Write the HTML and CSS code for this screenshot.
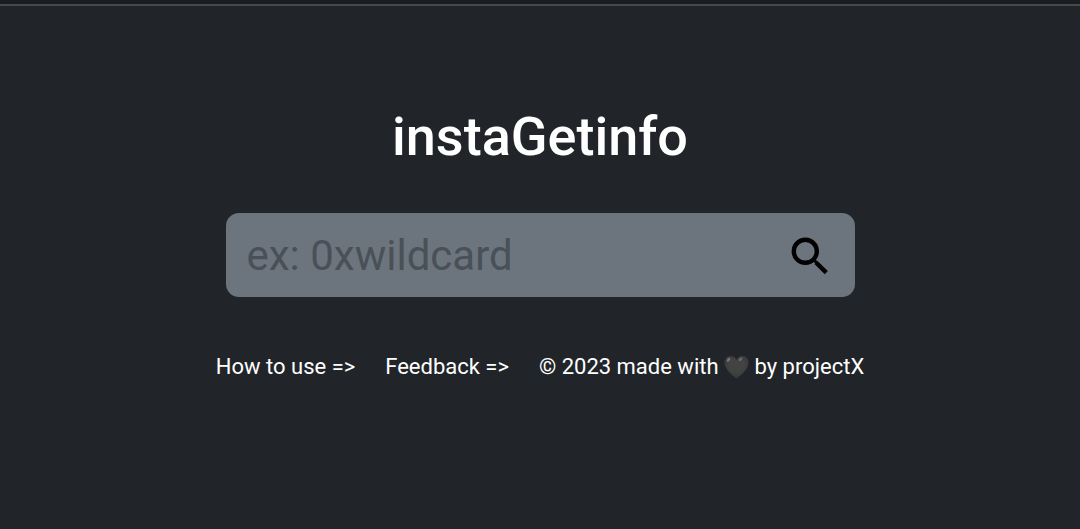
FILE: index.html
```html
<!DOCTYPE html>
<html lang="en">
<head>
<meta charset="utf-8">
<meta name="viewport" content="width=device-width, initial-scale=1">
<title>instaGetinfo</title>
<link rel="stylesheet" href="styles.css">
</head>
<body>
<header class="topbar"></header>
<main class="page">
  <h1 class="title">instaGetinfo</h1>
  <form class="search" role="search">
    <input class="search-input" type="text" placeholder="ex: 0xwildcard" aria-label="Username">
    <button class="search-button" type="submit" aria-label="Search">
      <svg class="search-icon" viewBox="0 0 50 50" aria-hidden="true">
        <circle cx="20.300" cy="20.300" r="11.500"/>
        <path d="M29 29l2.500 2.500" stroke-width="3"/>
        <path d="M31 31.500L41.300 41.600"/>
      </svg>
    </button>
  </form>
  <footer class="links">
    <a href="#how">How to use =&gt;</a>
    <a href="#feedback">Feedback =&gt;</a>
    <span>© 2023 made with
      <svg class="heart" viewBox="0 0 24 24" role="img" aria-label="love">
        <defs>
          <radialGradient id="heart-fill" cx="50%" cy="40%" r="60%">
            <stop offset="0.5" stop-color="#434343"/>
            <stop offset="1" stop-color="#383838"/>
          </radialGradient>
        </defs>
        <path fill="url(#heart-fill)" d="M12 23.5C8 20.5 0 14.500 0 7.300 0 3.500 2.700 1 6 1c2.700 0 5 1.500 6 4.200C13 2.500 15.300 1 18 1c3.300 0 6 2.500 6 6.300 0 7.200-8 13.200-12 16.200z"/>
        <ellipse cx="4" cy="4.800" rx="2.200" ry="1.300" fill="#777" transform="rotate(-48 4 4.800)"/>
        <ellipse cx="16" cy="4.300" rx="2.200" ry="1.200" fill="#6c6c6c" transform="rotate(-42 16 4.300)"/>
      </svg>
      by <a href="#projectx">projectX</a></span>
  </footer>
</main>
</body>
</html>
```
FILE: styles.css
```css
* {
  box-sizing: border-box;
}

body {
  margin: 0;
  min-height: 100vh;
  background: #212529;
  color: #fff;
  font-family: Roboto, "Liberation Sans", sans-serif;
}

.topbar {
  height: 6px;
  background: #1a1d20;
  border-bottom: 2px solid #45494c;
}

.page {
  display: flex;
  flex-direction: column;
  align-items: center;
  padding: 99px 16px 32px;
}

.title {
  margin: 0;
  font-size: 54px;
  font-weight: 500;
  line-height: 64px;
}

.search {
  display: flex;
  align-items: center;
  width: 100%;
  max-width: 629px;
  height: 84px;
  margin-top: 44px;
  padding: 2px 20px 0 21px;
  border-radius: 13px;
  background: #6c757d;
}

.search-input {
  flex: 1;
  min-width: 0;
  padding: 0;
  border: 0;
  outline: 0;
  background: transparent;
  color: #fff;
  font: inherit;
  font-size: 42px;
  line-height: 64px;
}

.search-input::placeholder {
  color: #495057;
  opacity: 1;
}

.search-button {
  display: flex;
  padding: 0;
  border: 0;
  background: transparent;
  color: #000;
  cursor: pointer;
}

.search-icon {
  width: 50px;
  height: 50px;
  fill: none;
  stroke: currentColor;
  stroke-width: 4.4;
}

.links {
  display: flex;
  flex-wrap: wrap;
  justify-content: center;
  gap: 16px 30px;
  margin-top: 54px;
  font-size: 22px;
  line-height: 32px;
}

.links a {
  color: inherit;
  text-decoration: none;
}

.heart {
  width: 25px;
  height: 24px;
  vertical-align: -5px;
}
```
